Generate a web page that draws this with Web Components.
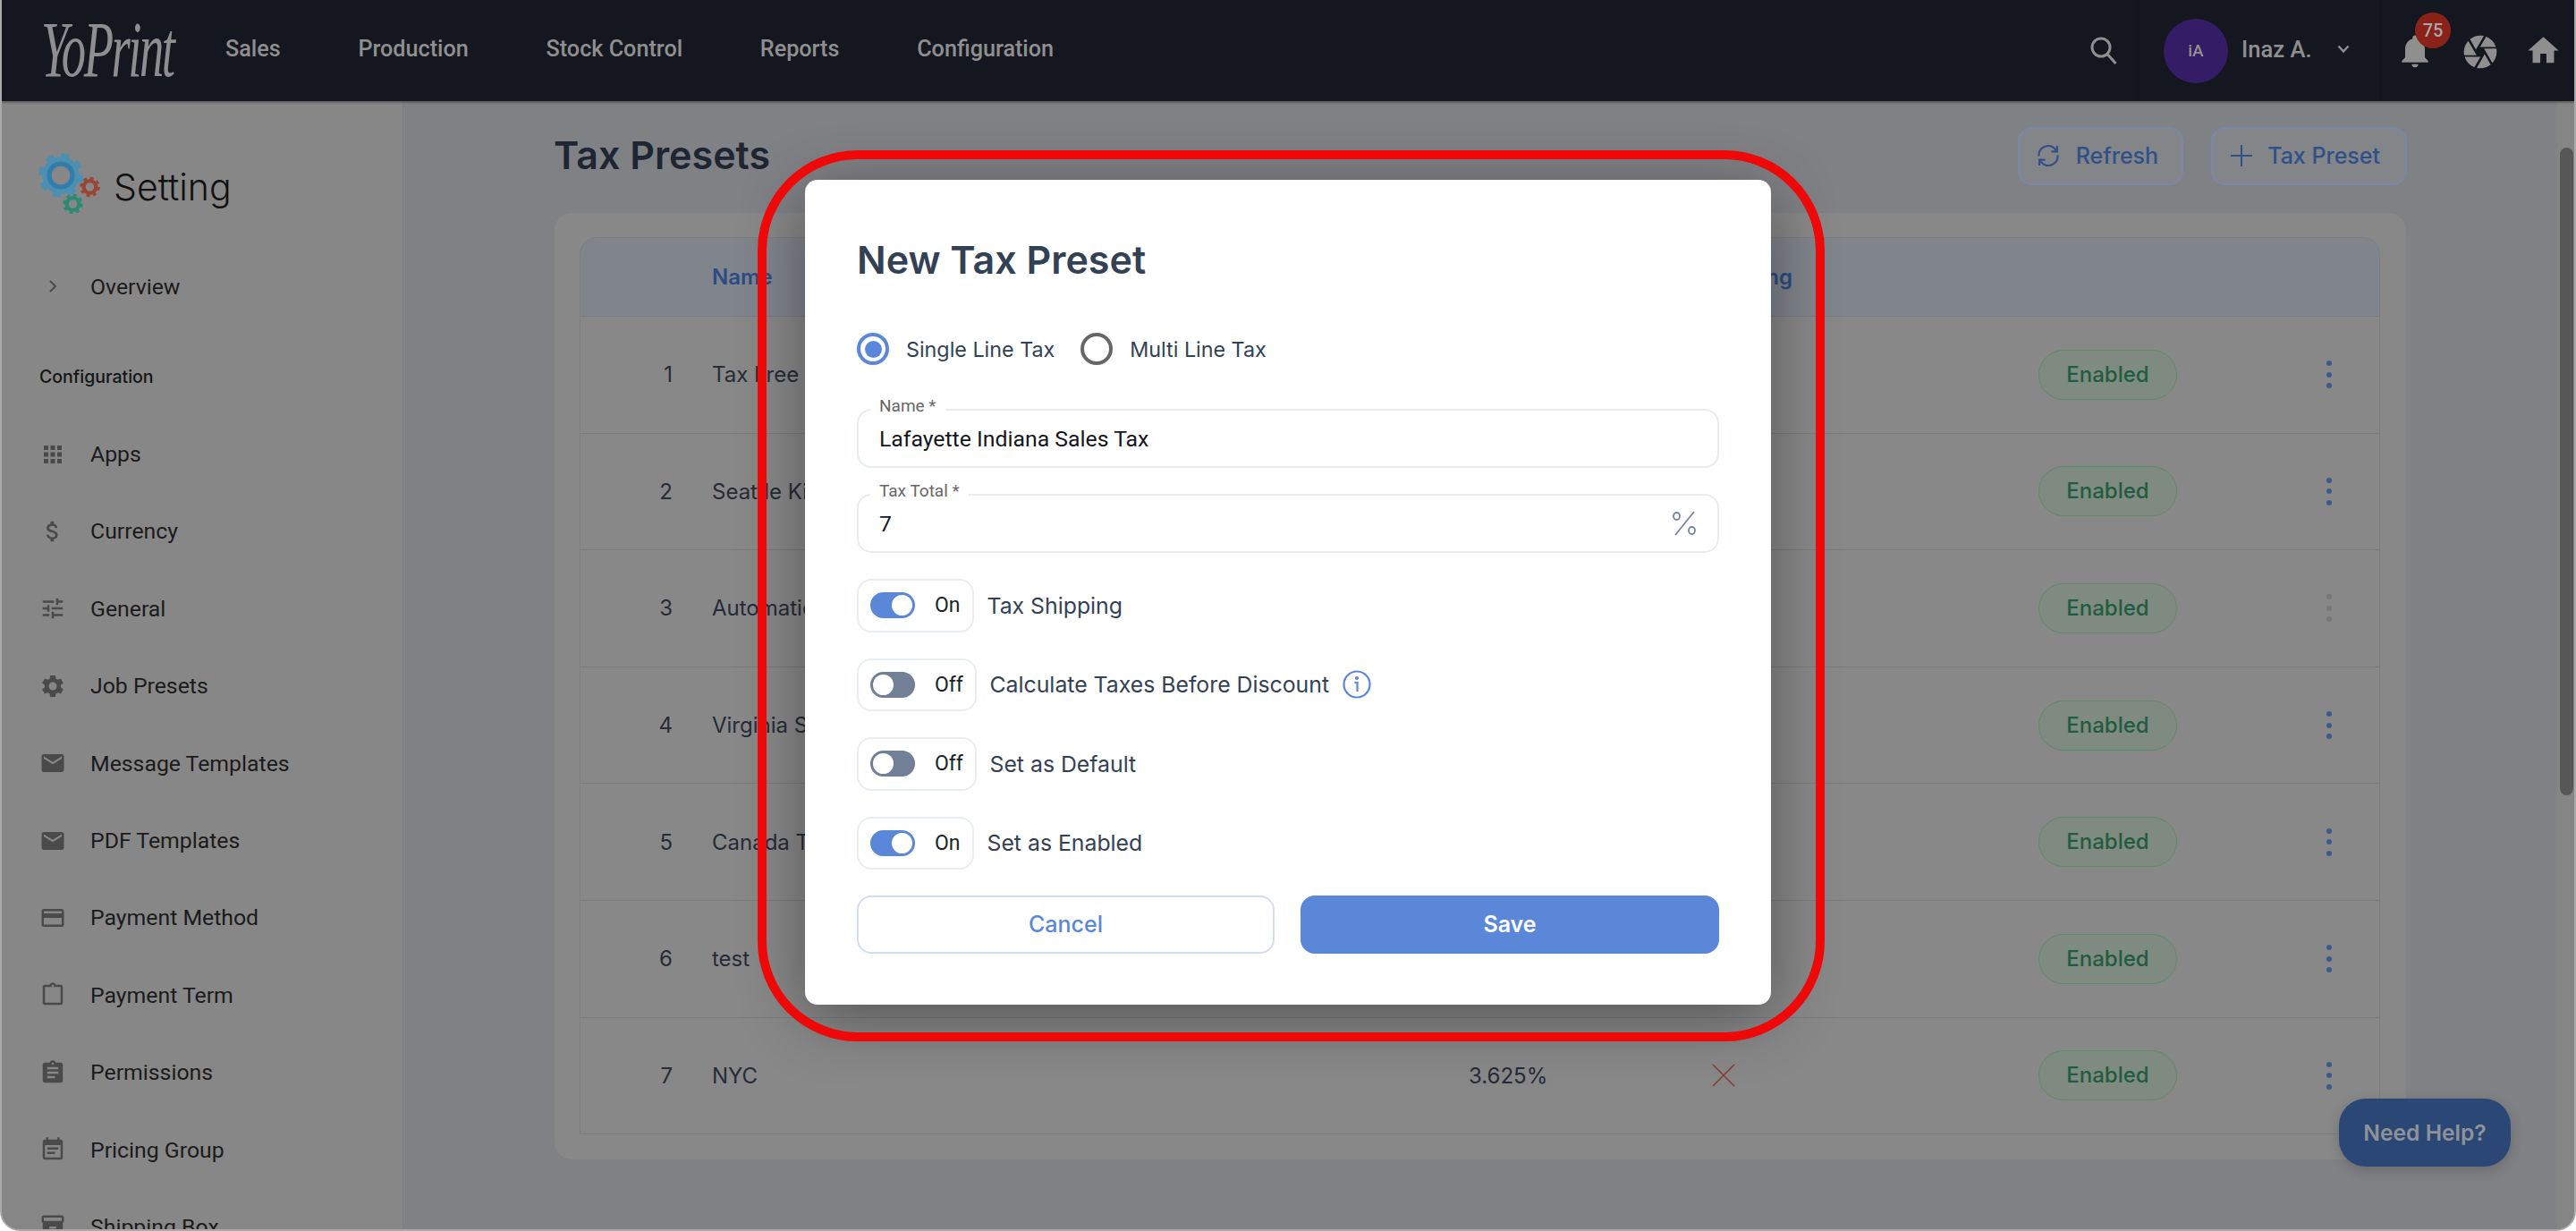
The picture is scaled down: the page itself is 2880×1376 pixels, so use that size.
<!DOCTYPE html>
<html lang="en">
<head>
<meta charset="utf-8">
<title>Tax Presets</title>
<style>
  html, body { margin: 0; background: #fff; }
  body { font-family: "Inter", "Liberation Sans", sans-serif; }
</style>
</head>
<body>
<yp-app>
  <yp-topbar slot="top"></yp-topbar>
  <yp-sidebar slot="side"></yp-sidebar>
  <yp-tax-page slot="main"></yp-tax-page>
  <yp-help slot="over"></yp-help>
  <yp-modal slot="over"></yp-modal>
</yp-app>

<script>
const icon = (d, size, color) => `<svg width="${size}" height="${size}" viewBox="0 0 24 24" fill="${color || 'currentColor'}"><path d="${d}"/></svg>`;

const ICONS = {
  apps: 'M4 8h4V4H4v4zm6 12h4v-4h-4v4zm-6 0h4v-4H4v4zm0-6h4v-4H4v4zm6 0h4v-4h-4v4zm6-10v4h4V4h-4zm-6 4h4V4h-4v4zm6 6h4v-4h-4v4zm0 6h4v-4h-4v4z',
  money: 'M11.8 10.9c-2.27-.59-3-1.2-3-2.15 0-1.09 1.01-1.85 2.7-1.85 1.78 0 2.44.85 2.5 2.1h2.21c-.07-1.72-1.12-3.3-3.21-3.81V3h-3v2.16c-1.94.42-3.5 1.68-3.5 3.61 0 2.31 1.91 3.46 4.7 4.13 2.5.6 3 1.48 3 2.41 0 .69-.49 1.79-2.7 1.79-2.06 0-2.87-.92-2.98-2.1h-2.2c.12 2.19 1.76 3.42 3.68 3.83V21h3v-2.15c1.95-.37 3.5-1.5 3.5-3.55 0-2.84-2.43-3.81-4.7-4.4z',
  tune: 'M3 17v2h6v-2H3zM3 5v2h10V5H3zm10 16v-2h8v-2h-8v-2h-2v6h2zM7 9v2H3v2h4v2h2V9H7zm14 4v-2H11v2h10zm-6-4h2V7h4V5h-4V3h-2v6z',
  gear: 'M19.14 12.94c.04-.3.06-.61.06-.94 0-.32-.02-.64-.07-.94l2.03-1.58c.18-.14.23-.41.12-.61l-1.92-3.32c-.12-.22-.37-.29-.59-.22l-2.39.96c-.5-.38-1.03-.7-1.62-.94l-.36-2.54c-.04-.24-.24-.41-.48-.41h-3.84c-.24 0-.43.17-.47.41l-.36 2.54c-.59.24-1.13.57-1.62.94l-2.39-.96c-.22-.08-.47 0-.59.22L2.74 8.87c-.12.21-.08.47.12.61l2.03 1.58c-.05.3-.09.63-.09.94s.02.64.07.94l-2.03 1.58c-.18.14-.23.41-.12.61l1.92 3.32c.12.22.37.29.59.22l2.39-.96c.5.38 1.03.7 1.62.94l.36 2.54c.05.24.24.41.48.41h3.84c.24 0 .44-.17.47-.41l.36-2.54c.59-.24 1.13-.56 1.62-.94l2.39.96c.22.08.47 0 .59-.22l1.92-3.32c.12-.22.07-.47-.12-.61l-2.01-1.58zM12 15.6c-1.98 0-3.6-1.62-3.6-3.6s1.62-3.6 3.6-3.6 3.6 1.62 3.6 3.6-1.62 3.6-3.6 3.6z',
  mail: 'M20 4H4c-1.1 0-1.99.9-1.99 2L2 18c0 1.1.9 2 2 2h16c1.1 0 2-.9 2-2V6c0-1.1-.9-2-2-2zm0 4l-8 5-8-5V6l8 5 8-5v2z',
  card: 'M20 4H4c-1.11 0-1.99.89-1.99 2L2 18c0 1.11.89 2 2 2h16c1.11 0 2-.89 2-2V6c0-1.11-.89-2-2-2zm0 14H4v-6h16v6zm0-10H4V6h16v2z',
  term: 'M19 3h-4.18C14.4 1.84 13.3 1 12 1c-1.3 0-2.4.84-2.82 2H5c-1.1 0-2 .9-2 2v14c0 1.1.9 2 2 2h14c1.1 0 2-.9 2-2V5c0-1.1-.9-2-2-2zm-7 0c.55 0 1 .45 1 1s-.45 1-1 1-1-.45-1-1 .45-1 1-1zm7 16H5V5h14v14z',
  perm: 'M19 3h-4.18C14.4 1.84 13.3 1 12 1c-1.3 0-2.4.84-2.82 2H5c-1.1 0-2 .9-2 2v14c0 1.1.9 2 2 2h14c1.1 0 2-.9 2-2V5c0-1.1-.9-2-2-2zm-7 0c.55 0 1 .45 1 1s-.45 1-1 1-1-.45-1-1 .45-1 1-1zm2 14H7v-2h7v2zm3-4H7v-2h10v2zm0-4H7V7h10v2z',
  note: 'M17 10H7v2h10v-2zm2-7h-1V1h-2v2H8V1H6v2H5c-1.11 0-1.99.9-1.99 2L3 19c0 1.1.89 2 2 2h14c1.1 0 2-.9 2-2V5c0-1.1-.9-2-2-2zm0 16H5V8h14v11zm-5-5H7v2h7v-2z',
  box: 'M20 2H4c-1 0-2 .9-2 2v3.01c0 .72.43 1.34 1 1.69V20c0 1.1 1.1 2 2 2h14c.9 0 2-.9 2-2V8.7c.57-.35 1-.97 1-1.69V4c0-1.1-1-2-2-2zm-5 12H9v-2h6v2zm5-7H4V4l16-.02V7z',
  bell: 'M12 22c1.1 0 2-.9 2-2h-4c0 1.1.89 2 2 2zm6-6v-5c0-3.07-1.64-5.64-4.5-6.32V4c0-.83-.67-1.5-1.5-1.5s-1.5.67-1.5 1.5v.68C7.63 5.36 6 7.92 6 11v5l-2 2v1h16v-1l-2-2z',
  camera: 'M9.4 10.5l4.77-8.26C13.47 2.09 12.75 2 12 2c-2.4 0-4.6.85-6.32 2.25l3.66 6.35.06-.1zM21.54 9c-.92-2.92-3.15-5.26-6-6.34L11.88 9h9.66zm.26 1h-7.49l.29.5 4.76 8.25C21 16.97 22 14.61 22 12c0-.69-.07-1.35-.2-2zM8.54 12l-3.9-6.75C3.01 7.03 2 9.39 2 12c0 .69.07 1.35.2 2h7.49l-1.15-2zm-6.08 3c.92 2.92 3.15 5.26 6 6.34L12.12 15H2.46zm11.27 0l-3.9 6.76c.7.15 1.42.24 2.17.24 2.4 0 4.6-.85 6.32-2.25l-3.66-6.35-.93 1.6z',
  home: 'M10 20v-6h4v6h5v-8h3L12 3 2 12h3v8z'
};

class YpApp extends HTMLElement {
  connectedCallback() {
    this.attachShadow({ mode: 'open' });
    this.shadowRoot.innerHTML = `
      <style>
        :host {
          display: flex;
          flex-direction: column;
          position: relative;
          box-sizing: border-box;
          height: 1376px;
          overflow: hidden;
          border: solid #a9a9a9;
          border-width: 0 2px 2px;
          border-radius: 0 0 22px 22px;
          background: #808185;
        }
        .body { display: flex; flex: 1; min-height: 0; }
        .track { width: 19px; flex: none; background: #858585; box-sizing: border-box; padding: 52px 1px 0 3px; }
        .thumb { height: 724px; border-radius: 8px; background: #575757; }
      </style>
      <slot name="top"></slot>
      <div class="body">
        <slot name="side"></slot>
        <slot name="main"></slot>
        <div class="track"><div class="thumb"></div></div>
      </div>
      <slot name="over"></slot>
    `;
  }
}

class YpTopbar extends HTMLElement {
  connectedCallback() {
    this.attachShadow({ mode: 'open' });
    this.shadowRoot.innerHTML = `
      <style>
        :host {
          display: flex;
          align-items: center;
          flex: none;
          height: 113px;
          background: #141720;
          color: #8f8f8f;
          font: 500 25.2px "Roboto", "Liberation Sans", sans-serif;
          box-shadow: 0 2px 2px rgba(0,0,0,.28);
          position: relative;
          z-index: 2;
        }
        .logo {
          width: 250px;
          flex: none;
          box-sizing: border-box;
          padding-left: 44px;
          margin-top: -2px;
          font: italic 400 88px/88px "Liberation Serif", serif;
          color: #8e8e8e;
          letter-spacing: -4px;
          white-space: nowrap;
        }
        .logo span { display: inline-block; transform: scaleX(.62); transform-origin: left center; }
        nav { display: flex; gap: 86.7px; margin-top: -4px; }
        .right { margin-left: auto; display: flex; align-items: center; height: 100%; }
        .search { width: 30px; height: 31px; margin-right: 23px; }
        .user {
          display: flex; align-items: center; height: 100%;
          width: 272px; box-sizing: border-box;
          border: solid #11141c; border-width: 0 1px;
          padding-left: 28px;
        }
        .avatar {
          width: 72px; height: 72px; border-radius: 50%;
          background: #351c66; color: #8f8f8f;
          font: 500 19px "Roboto", sans-serif;
          display: flex; align-items: center; justify-content: center;
          margin-right: 15px;
        }
        .name { font-size: 25.6px; width: 107px; margin-top: -3px; }
        .user svg { margin-top: -3px; }
        .icons { display: flex; align-items: center; position: relative; width: 216px; }
        .bell { margin-left: 16px; display: flex; }
        .cam { margin-left: 29px; margin-top: 2px; display: flex; }
        .home { margin-left: 28px; display: flex; }
        .badge {
          position: absolute; left: 38px; top: -20px;
          width: 40px; height: 40px; border-radius: 50%;
          background: #8a2218; color: #a8a8a8;
          font: 500 20px/40px "Roboto", sans-serif; text-align: center;
        }
      </style>
      <div class="logo"><span>YoPrint</span></div>
      <nav><span>Sales</span><span>Production</span><span>Stock Control</span><span>Reports</span><span>Configuration</span></nav>
      <div class="right">
        <svg class="search" viewBox="0 0 30 31" fill="none" stroke="currentColor" stroke-width="3"><circle cx="12" cy="12" r="10"/><path d="M19.5 20l9 10"/></svg>
        <div class="user">
          <div class="avatar">iA</div>
          <span class="name">Inaz A.</span>
          <svg width="14" height="10" viewBox="0 0 14 10" fill="none" stroke="currentColor" stroke-width="2.4"><path d="M1.5 1.5l5.5 6 5.5-6"/></svg>
        </div>
        <div class="icons">
          <span class="bell">${icon(ICONS.bell, 44)}</span>
          <span class="badge">75</span>
          <span class="cam">${icon(ICONS.camera, 44)}</span>
          <span class="home">${icon(ICONS.home, 41)}</span>
        </div>
      </div>
    `;
  }
}

class YpNavItem extends HTMLElement {
  connectedCallback() {
    this.attachShadow({ mode: 'open' });
    this.shadowRoot.innerHTML = `
      <style>
        :host {
          display: flex; align-items: center;
          height: 86.4px; flex: none;
          padding-left: 43px;
          font: 400 24.8px "Roboto", "Liberation Sans", sans-serif;
          color: #1b1b1b;
        }
        .ic { width: 30px; height: 30px; flex: none; margin-right: 27px; color: #4a4a4a; display: flex; margin-left: -1px; }
      </style>
      <span class="ic">${this.getAttribute('icon') ? icon(ICONS[this.getAttribute('icon')], 30) : `<svg width="30" height="30" viewBox="0 0 30 30" fill="none" stroke="#4a4a4a" stroke-width="2"><path d="M12 9l6 6-6 6"/></svg>`}</span>
      <slot></slot>
    `;
  }
}

class YpSidebar extends HTMLElement {
  connectedCallback() {
    this.attachShadow({ mode: 'open' });
    this.shadowRoot.innerHTML = `
      <style>
        :host {
          display: block; flex: none;
          width: 449px; box-sizing: border-box;
          background: #878787;
          border-right: 1px solid #7a7c82;
          padding-top: 58px;
          overflow: hidden;
        }
        .head { display: flex; align-items: center; height: 68px; padding-left: 41px; margin-bottom: 38px; }
        .head span { font: 300 41px "Inter", sans-serif; color: #111; margin-left: 12px; margin-top: 8px; }
        .title { font: 500 19.5px/30px "Inter", sans-serif; color: #151515; padding-left: 42px; margin: 43px 0 28px; }
      </style>
      <div class="head">
        <svg width="72" height="68" viewBox="0 0 72 68">
          <circle cx="25" cy="25" r="22.500" fill="none" stroke="#4d8fb2" stroke-width="5" stroke-dasharray="8.800 8.870"/>
          <circle cx="25" cy="25" r="21" fill="#4d8fb2"/>
          <circle cx="25" cy="25" r="15.500" fill="#2f7dab"/>
          <circle cx="25" cy="25" r="10.500" fill="#878787"/>
          <circle cx="57.500" cy="38" r="10" fill="none" stroke="#9b4434" stroke-width="2.500" stroke-dasharray="3.900 3.950"/>
          <circle cx="57.500" cy="38" r="9" fill="#9b4434"/>
          <circle cx="57.500" cy="38" r="4.800" fill="#878787"/>
          <circle cx="38.500" cy="57" r="10" fill="none" stroke="#2b8a72" stroke-width="2.500" stroke-dasharray="3.900 3.950"/>
          <circle cx="38.500" cy="57" r="9" fill="#2b8a72"/>
          <circle cx="38.500" cy="57" r="4.800" fill="#878787"/>
        </svg>
        <span>Setting</span>
      </div>
      <yp-nav-item>Overview</yp-nav-item>
      <div class="title">Configuration</div>
      <yp-nav-item icon="apps">Apps</yp-nav-item>
      <yp-nav-item icon="money">Currency</yp-nav-item>
      <yp-nav-item icon="tune">General</yp-nav-item>
      <yp-nav-item icon="gear">Job Presets</yp-nav-item>
      <yp-nav-item icon="mail">Message Templates</yp-nav-item>
      <yp-nav-item icon="mail">PDF Templates</yp-nav-item>
      <yp-nav-item icon="card">Payment Method</yp-nav-item>
      <yp-nav-item icon="term">Payment Term</yp-nav-item>
      <yp-nav-item icon="perm">Permissions</yp-nav-item>
      <yp-nav-item icon="note">Pricing Group</yp-nav-item>
      <yp-nav-item icon="box">Shipping Box</yp-nav-item>
    `;
  }
}

class YpOutlineButton extends HTMLElement {
  connectedCallback() {
    this.attachShadow({ mode: 'open' });
    this.shadowRoot.innerHTML = `
      <style>
        :host {
          display: inline-flex; align-items: center;
          box-sizing: border-box; height: 65px;
          background: #838589;
          border: 2px solid #7889a8; border-radius: 16px;
          padding: 0 26px 2px 18px; gap: 17px;
          font: 500 25px "Inter", sans-serif; color: #2f5088;
        }
        ::slotted(svg) { flex: none; }
      </style>
      <slot></slot>
    `;
  }
}

const COLS = '147px 846px 157px 255px 225px 155px 227px';

class YpTableHead extends HTMLElement {
  connectedCallback() {
    this.attachShadow({ mode: 'open' });
    this.shadowRoot.innerHTML = `
      <style>
        :host {
          display: grid; grid-template-columns: ${COLS}; align-items: center;
          box-sizing: border-box; height: 88px;
          background: #80858b; border-bottom: 1px solid #767a82;
          border-radius: 20px 20px 0 0;
          font: 600 24px "Inter", sans-serif; color: #2b4b85;
        }
        .c { text-align: center; padding-left: 5px; }
      </style>
      <span></span><span>Name</span><span></span><span class="c">Tax Shipping</span><span></span><span></span><span></span>
    `;
  }
}

class YpTableRow extends HTMLElement {
  connectedCallback() {
    const faded = this.hasAttribute('faded');
    const ship = this.hasAttribute('noship');
    this.attachShadow({ mode: 'open' });
    this.shadowRoot.innerHTML = `
      <style>
        :host {
          display: grid; grid-template-columns: ${COLS}; align-items: center;
          box-sizing: border-box; height: 130.6px;
          border-bottom: 1px solid #797b7f;
          font: 400 24px "Inter", sans-serif; color: #262b38;
        }
        .n { text-align: right; padding-right: 44px; }
        .c { display: flex; justify-content: center; }
        .pill {
          box-sizing: border-box; height: 56px; border-radius: 28px;
          background: #7f8a80; border: 1px solid #5e8a68;
          color: #1f5c42; font: 500 24px/54px "Inter", sans-serif; text-align: center;
        }
        .dots { padding-left: 167px; display: flex; flex-direction: column; gap: 6.5px; }
        .dots i { width: 6px; height: 6px; border-radius: 50%; background: ${faded ? '#74777d' : '#3d5a8e'}; }
      </style>
      <span class="n">${this.getAttribute('n')}</span>
      <span>${this.getAttribute('name')}</span>
      <span>${this.getAttribute('tax') || ''}</span>
      <span class="c">${ship ? `<svg width="26" height="26" viewBox="0 0 26 26" fill="none" stroke="#8a3a34" stroke-width="1.6"><path d="M1 1l24 24M25 1L1 25"/></svg>` : ''}</span>
      <span></span>
      <span class="pill">Enabled</span>
      <span class="dots"><i></i><i></i><i></i></span>
    `;
  }
}

class YpTaxPage extends HTMLElement {
  connectedCallback() {
    this.attachShadow({ mode: 'open' });
    this.shadowRoot.innerHTML = `
      <style>
        :host { display: block; flex: 1; min-width: 0; box-sizing: border-box; padding: 29px 168px 0; background: #808185; }
        .top { display: flex; align-items: center; gap: 31px; height: 65px; margin-bottom: 30px; }
        h1 { margin: -3px auto 0 0; font: 600 43px "Inter", sans-serif; color: #1e2633; }
        .card {
          box-sizing: border-box; height: 1060px;
          background: #888888; border: 1px solid #7e8086; border-radius: 20px;
          padding: 27px 29px 29px 28px;
        }
        .table { border: solid #7b7d83; border-width: 1px 1px 0; border-radius: 20px 20px 0 0; }
      </style>
      <div class="top">
        <h1>Tax Presets</h1>
        <yp-outline-button>
          <svg width="28" height="30" viewBox="0 0 24 24" fill="none" stroke="currentColor" stroke-width="1.8"><path d="M3 12.5a9 9 0 0 1 15.5-7L20.5 8M20.5 2.5V8H15M21 11.500a9 9 0 0 1-15.500 7L3.500 16M3.500 21.500V16H9"/></svg>
          Refresh
        </yp-outline-button>
        <yp-outline-button style="padding:0 28px 2px 20px;gap:17px">
          <svg width="24" height="24" viewBox="0 0 24 24" fill="none" stroke="currentColor" stroke-width="2"><path d="M12 0v24M0 12h24"/></svg>
          Tax Preset
        </yp-outline-button>
      </div>
      <div class="card">
        <div class="table">
          <yp-table-head></yp-table-head>
          <yp-table-row n="1" name="Tax Free"></yp-table-row>
          <yp-table-row n="2" name="Seattle King"></yp-table-row>
          <yp-table-row n="3" name="Automatic" faded></yp-table-row>
          <yp-table-row n="4" name="Virginia Sales"></yp-table-row>
          <yp-table-row n="5" name="Canada Tax"></yp-table-row>
          <yp-table-row n="6" name="test"></yp-table-row>
          <yp-table-row n="7" name="NYC" tax="3.625%" noship></yp-table-row>
        </div>
      </div>
    `;
  }
}

class YpHelp extends HTMLElement {
  connectedCallback() {
    this.attachShadow({ mode: 'open' });
    this.shadowRoot.innerHTML = `
      <style>
        :host {
          position: absolute; right: 71px; bottom: 70px;
          width: 192px; height: 76px; border-radius: 30px;
          background: #2b4775; color: #8f9299;
          font: 600 24.6px/76px "Inter", sans-serif; text-align: center;
          box-shadow: 0 4px 14px rgba(0,0,0,.18);
        }
      </style>
      Need Help?
    `;
  }
}

class YpRadio extends HTMLElement {
  connectedCallback() {
    const on = this.hasAttribute('checked');
    this.attachShadow({ mode: 'open' });
    this.shadowRoot.innerHTML = `
      <style>
        :host { display: inline-flex; align-items: center; gap: 19px; font: 400 23.3px "Inter", sans-serif; color: #334155; }
        .dot {
          box-sizing: border-box; width: 36px; height: 36px; border-radius: 50%;
          border: 4px solid ${on ? '#5b87d9' : '#666'};
          display: flex; align-items: center; justify-content: center;
        }
        .dot i { width: 19px; height: 19px; border-radius: 50%; background: ${on ? '#5b87d9' : 'transparent'}; }
      </style>
      <span class="dot"><i></i></span><slot></slot>
    `;
  }
}

class YpField extends HTMLElement {
  connectedCallback() {
    this.attachShadow({ mode: 'open' });
    this.shadowRoot.innerHTML = `
      <style>
        :host {
          display: flex; align-items: center; position: relative;
          box-sizing: border-box; height: 66px;
          border: 2px solid #e7ebf3; border-radius: 16px;
          padding: 0 24px 0 23px;
          font: 400 24.8px "Roboto", sans-serif; color: #14171f;
        }
        label {
          position: absolute; left: 13px; top: -17px; padding: 0 10px;
          background: #fff; color: #666;
          font: 400 19px/24px "Roboto", sans-serif; white-space: nowrap;
        }
        .v { flex: 1; }
        svg { flex: none; margin-right: -1px; }
      </style>
      <label>${this.getAttribute('label')} *</label>
      <span class="v"><slot></slot></span>
      ${this.hasAttribute('percent') ? `<svg width="28" height="28" viewBox="0 0 28 28" fill="none" stroke="#74849e" stroke-width="1.800"><path d="M25 1L4 27"/><ellipse cx="5.500" cy="6" rx="3.500" ry="4"/><ellipse cx="22.500" cy="22" rx="3.500" ry="4"/></svg>` : ''}
    `;
  }
}

class YpToggle extends HTMLElement {
  connectedCallback() {
    const on = this.hasAttribute('on');
    this.attachShadow({ mode: 'open' });
    this.shadowRoot.innerHTML = `
      <style>
        :host { display: flex; align-items: center; height: 59.500px; font: 400 24.8px "Inter", sans-serif; color: #334155; }
        .box {
          display: flex; align-items: center; height: 100%;
          box-sizing: border-box; width: ${on ? 131 : 133.5}px; padding-left: 13px;
          border: 2px solid #e9edf4; border-radius: 16px; margin-right: ${on ? 14.5 : 15}px;
        }
        .sw {
          box-sizing: border-box; width: 50px; height: 29px; border-radius: 15px;
          background: ${on ? '#5b87d9' : '#718096'}; padding: 3px;
          display: flex; justify-content: ${on ? 'flex-end' : 'flex-start'};
          margin-right: 22px;
        }
        .sw i { width: 23px; height: 23px; border-radius: 50%; background: #fff; }
        .t { font: 400 23px "Roboto", sans-serif; color: #1c1f26; }
        ::slotted(svg) { margin-left: 15px; }
      </style>
      <div class="box"><span class="sw"><i></i></span><span class="t">${on ? 'On' : 'Off'}</span></div>
      <slot></slot>
    `;
  }
}

class YpModal extends HTMLElement {
  connectedCallback() {
    this.attachShadow({ mode: 'open' });
    this.shadowRoot.innerHTML = `
      <style>
        :host {
          position: absolute; left: 898px; top: 201px;
          display: block; width: 1080px; height: 922px;
          box-sizing: border-box; padding: 65px 58px 0;
          background: #fff; border-radius: 14px;
          box-shadow: 0 14px 70px rgba(0,0,0,.38);
        }
        .ring {
          position: absolute; left: -53px; top: -33px; right: -60px; bottom: -41px;
          border: 10px solid #ee0808; border-radius: 112px;
        }
        h2 { margin: 0 0 58px; font: 600 43px/48px "Inter", sans-serif; color: #334155; }
        .radios { display: flex; gap: 29px; height: 36px; margin-bottom: 49px; }
        .stack { display: flex; flex-direction: column; gap: 29px; }
        .btns { display: grid; grid-template-columns: 467px 468px; gap: 29px; }
        .btn {
          height: 65px; box-sizing: border-box; border-radius: 16px;
          font: 500 25px/61px "Inter", sans-serif; text-align: center;
          border: 2px solid #d3ddf1; color: #5b87d9;
        }
        .btn.save { background: #5b87d9; border-color: #5b87d9; color: #fff; font-weight: 600; }
      </style>
      <div class="ring"></div>
      <h2>New Tax Preset</h2>
      <div class="radios">
        <yp-radio checked>Single Line Tax</yp-radio>
        <yp-radio>Multi Line Tax</yp-radio>
      </div>
      <div class="stack">
        <yp-field label="Name">Lafayette Indiana Sales Tax</yp-field>
        <yp-field label="Tax Total" percent>7</yp-field>
        <yp-toggle on>Tax Shipping</yp-toggle>
        <yp-toggle>Calculate Taxes Before Discount
          <svg width="32" height="32" viewBox="0 0 32 32" fill="none" stroke="#5b87d9" stroke-width="2.200"><circle cx="16" cy="16" r="14.500"/><path d="M13.500 14h3v10"/><circle cx="16" cy="9" r="1" fill="#5b87d9"/></svg>
        </yp-toggle>
        <yp-toggle>Set as Default</yp-toggle>
        <yp-toggle on>Set as Enabled</yp-toggle>
        <div class="btns"><div class="btn">Cancel</div><div class="btn save">Save</div></div>
      </div>
    `;
  }
}

customElements.define('yp-app', YpApp);
customElements.define('yp-topbar', YpTopbar);
customElements.define('yp-nav-item', YpNavItem);
customElements.define('yp-sidebar', YpSidebar);
customElements.define('yp-outline-button', YpOutlineButton);
customElements.define('yp-table-head', YpTableHead);
customElements.define('yp-table-row', YpTableRow);
customElements.define('yp-tax-page', YpTaxPage);
customElements.define('yp-help', YpHelp);
customElements.define('yp-radio', YpRadio);
customElements.define('yp-field', YpField);
customElements.define('yp-toggle', YpToggle);
customElements.define('yp-modal', YpModal);
</script>
</body>
</html>
